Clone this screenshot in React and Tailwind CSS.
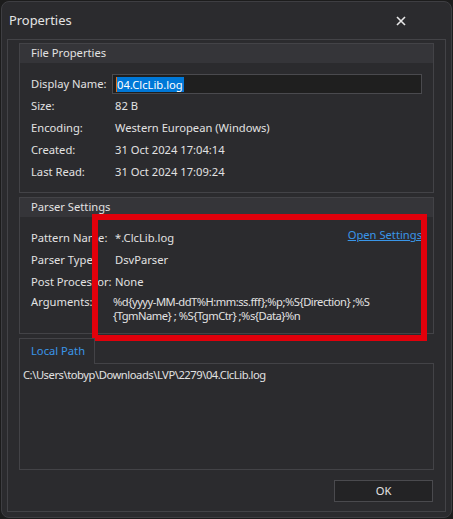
import React from "react";

const font = { fontFamily: '"Noto Sans", "Open Sans", sans-serif' };

function Row({ label, children, className = "" }) {
  return (
    <div className={"flex items-center h-[22px] " + className}>
      <div className="w-[84px] shrink-0 whitespace-nowrap">{label}</div>
      <div className="flex-1 whitespace-nowrap">{children}</div>
    </div>
  );
}

export default function App() {
  return (
    <div
      className="w-[453px] h-[519px] bg-[#1c1c1c] relative overflow-hidden text-[11.2px] text-[#e2e2e2]"
      style={font}
    >
      <div className="absolute left-[1px] top-[1px] w-[451px] h-[517px] rounded-lg border border-[#3e3e42] bg-[#2b2b2e] flex flex-col">
        {/* title bar */}
        <div className="h-[37px] flex items-center justify-between pl-[7px] pr-[45px] shrink-0">
          <span className="text-[12.9px] text-[#e4e4e4] leading-none">Properties</span>
          <svg width="10" height="10" viewBox="0 0 10 10" className="mt-[1px]">
            <path d="M1 1 L9 9 M9 1 L1 9" stroke="#e8e8e8" strokeWidth="1.6" />
          </svg>
        </div>
        {/* frame */}
        <div className="mx-[5px] mb-[5px] flex-1 border border-[#434347] pt-[3px] px-[11px] flex flex-col">
          {/* File Properties */}
          <div className="border border-[#434347]">
            <div className="h-[19px] bg-[#353539] flex items-center pl-[11px]">File Properties</div>
            <div className="pl-[11px] pr-[11px] pt-[10px] pb-[9px]">
              <div className="flex items-center h-[22px]">
                <div className="w-[81px] shrink-0 whitespace-nowrap">Display Name:</div>
                <div className="flex-1 h-[20px] bg-[#1f1f1f] border border-[#4a4a4e] flex items-center pl-[3px]">
                  <span className="w-[1px] h-[15px] bg-[#e07020]" />
                  <span className="bg-[#0078d7] text-white leading-[15px] h-[15px] pr-[1px]">04.ClcLib.log</span>
                </div>
              </div>
              <Row label="Size:">82 B</Row>
              <Row label="Encoding:">Western European (Windows)</Row>
              <Row label="Created:">31 Oct 2024 17:04:14</Row>
              <Row label="Last Read:">31 Oct 2024 17:09:24</Row>
            </div>
          </div>

          {/* Parser Settings */}
          <div className="border border-[#434347] mt-[4px]">
            <div className="h-[19px] bg-[#353539] flex items-center pl-[11px]">Parser Settings</div>
            <div className="pl-[11px] pr-[11px] pt-[10px] pb-[10px]">
              <div className="flex items-center h-[22px]">
                <div className="w-[84px] shrink-0 whitespace-nowrap">Pattern Name:</div>
                <div className="flex-1 whitespace-nowrap">*.ClcLib.log</div>
                <a className="text-[#3a96e8] underline mb-[5px] cursor-pointer">Open Settings</a>
              </div>
              <Row label="Parser Type:">DsvParser</Row>
              <Row label="Post Processor:">None</Row>
              <div className="flex leading-[14px] pt-[2px]">
                <div className="w-[82px] shrink-0 whitespace-nowrap">Arguments:</div>
                <div className="flex-1 whitespace-nowrap tracking-[-0.5px]">
                  %d{"{"}yyyy-MM-ddT%H:mm:ss.fff{"}"};%p;%S{"{"}Direction{"}"} ;%S
                  <br />
                  {"{"}TgmName{"}"} ; %S{"{"}TgmCtr{"}"} ;%s{"{"}Data{"}"}%n
                </div>
              </div>
            </div>
          </div>

          {/* Local Path tab */}
          <div className="mt-[4px] flex flex-col">
            <div className="w-[76px] h-[26px] border-l border-t border-r border-[#434347] bg-[#2b2b2e] relative z-10 mb-[-1px] flex items-center pl-[11px] text-[#3a96e8]">
              Local Path
            </div>
            <div className="h-[107px] border border-[#434347] pl-[3px] pt-[3px] whitespace-nowrap tracking-[-0.45px]">
              C:\Users\tobyp\Downloads\LVP\2279\04.ClcLib.log
            </div>
          </div>

          {/* OK */}
          <div className="flex justify-end mt-[10px] pr-[1px]">
            <button className="w-[99px] h-[22px] border border-[#4a4a4e] bg-[#232325] text-[#e4e4e4] flex items-center justify-center">
              OK
            </button>
          </div>
        </div>
      </div>

      {/* red annotation */}
      <div className="absolute left-[92px] top-[214px] w-[335px] h-[127px] border-[6px] border-[#e1000b] pointer-events-none" />
    </div>
  );
}
